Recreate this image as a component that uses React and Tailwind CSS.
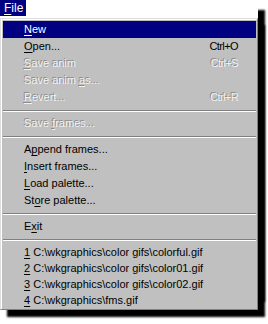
import React from "react";

const items = [
  { label: "New", u: 0, active: true },
  { label: "Open...", u: 0, shortcut: "Ctrl+O" },
  { label: "Save anim", u: 0, disabled: true, shortcut: "Ctrl+S" },
  { label: "Save anim as...", u: 10, disabled: true },
  { label: "Revert...", u: 0, disabled: true, shortcut: "Ctrl+R" },
  { sep: true },
  { label: "Save frames...", u: 5, disabled: true },
  { sep: true },
  { label: "Append frames...", u: 1 },
  { label: "Insert frames...", u: 0 },
  { label: "Load palette...", u: 0 },
  { label: "Store palette...", u: 2 },
  { sep: true },
  { label: "Exit", u: 1 },
  { sep: true },
  { label: "1 C:\\wkgraphics\\color gifs\\colorful.gif", u: 0, mru: true },
  { label: "2 C:\\wkgraphics\\color gifs\\color01.gif", u: 0, mru: true },
  { label: "3 C:\\wkgraphics\\color gifs\\color02.gif", u: 0, mru: true },
  { label: "4 C:\\wkgraphics\\fms.gif", u: 0, mru: true },
];

function Label({ text, u }) {
  return (
    <span className="whitespace-pre">
      {text.slice(0, u)}
      <span className="underline underline-offset-[2px]">{text[u]}</span>
      {text.slice(u + 1)}
    </span>
  );
}

function MenuRow({ item }) {
  if (item.sep) {
    return (
      <div className="h-[9px] flex items-center">
        <div className="w-full border-t border-b border-t-[#808080] border-b-white" />
      </div>
    );
  }
  let tone = "text-black";
  if (item.active) tone = "bg-[#000080] text-white";
  if (item.disabled) tone = "text-[#f2f2f2] [text-shadow:-1px_-1px_0_#8a8a8a]";
  return (
    <div
      className={`flex items-center justify-between pl-[21px] pr-[18px] ${item.mru ? "h-[16px]" : "h-[17px]"} ${tone}`}
    >
      <Label text={item.label} u={item.u} />
      {item.shortcut && <span className="tracking-[-0.6px]">{item.shortcut}</span>}
    </div>
  );
}

export default function App() {
  return (
    <div className="w-[268px] h-[324px] bg-white overflow-hidden font-['Liberation_Sans',Arial,sans-serif] text-[11px] leading-none">
      {/* menu bar */}
      <div className="relative z-10 w-[258px] h-[18px] bg-white">
        <div className="w-[26px] h-[16px] bg-[#000080] text-white text-[12px] flex items-center pl-[4px]">
          <Label text="File" u={0} />
        </div>
      </div>

      {/* dropdown */}
      <div className="w-[258px] bg-[#c0c0c0] border-l border-t border-r border-b border-l-[#dfdfdf] border-t-[#dfdfdf] border-r-[#808080] border-b-[#808080] shadow-[7px_7px_2px_#000,7px_-8px_2px_#000]">
        <div className="border-l border-t border-l-white border-t-white p-px">
          {items.map((item, i) => (
            <MenuRow key={i} item={item} />
          ))}
        </div>
      </div>
    </div>
  );
}
